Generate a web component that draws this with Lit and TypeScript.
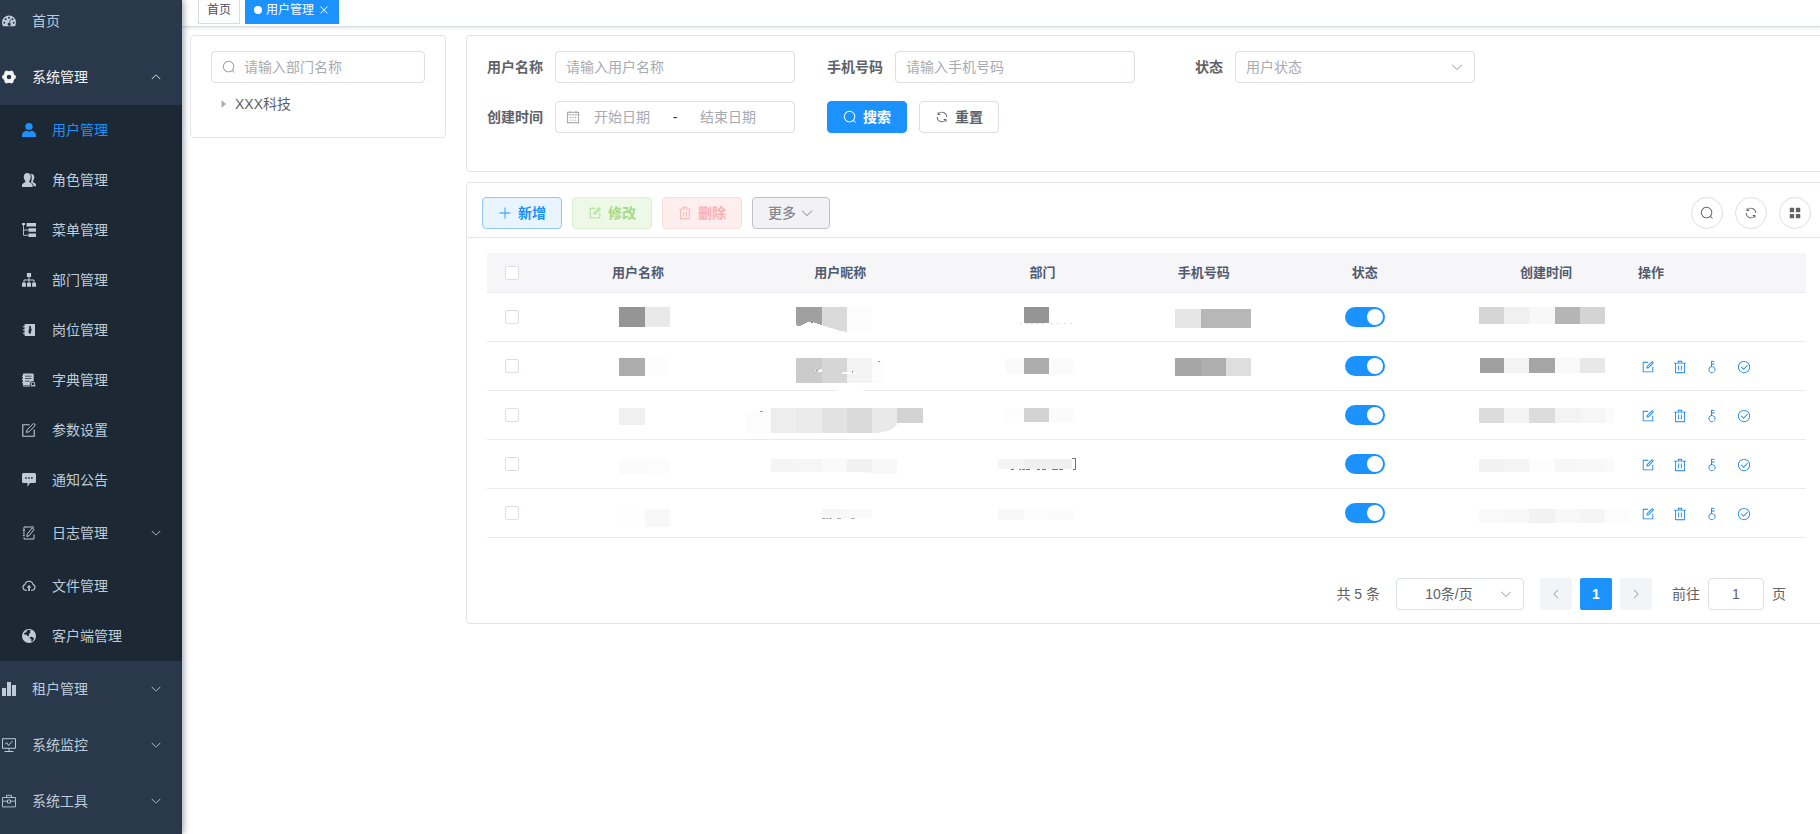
import { LitElement, html, css, svg, nothing } from "lit";
import { customElement, state } from "lit/decorators.js";
import { classMap } from "lit/directives/class-map.js";

const glyphs: Record<string, string> = {
  search: "M795.904 750.72l124.992 124.928a32 32 0 0 1-45.248 45.248L750.656 795.904a416 416 0 1 1 45.248-45.248zM480 832a352 352 0 1 0 0-704 352 352 0 0 0 0 704z",
  refresh: "M771.776 794.88A384 384 0 0 1 128 512h64a320 320 0 0 0 555.712 216.448H654.72a32 32 0 1 1 0-64h149.056a32 32 0 0 1 32 32v148.928a32 32 0 1 1-64 0v-50.56zM276.288 295.616h92.992a32 32 0 0 1 0 64H220.16a32 32 0 0 1-32-32V178.56a32 32 0 0 1 64 0v50.56A384 384 0 0 1 896.128 512h-64a320 320 0 0 0-555.776-216.384z",
  grid: "M160 448a32 32 0 0 1-32-32V160a32 32 0 0 1 32-32h256a32 32 0 0 1 32 32v256a32 32 0 0 1-32 32zm448 0a32 32 0 0 1-32-32V160a32 32 0 0 1 32-32h256a32 32 0 0 1 32 32v256a32 32 0 0 1-32 32zM160 896a32 32 0 0 1-32-32V608a32 32 0 0 1 32-32h256a32 32 0 0 1 32 32v256a32 32 0 0 1-32 32zm448 0a32 32 0 0 1-32-32V608a32 32 0 0 1 32-32h256a32 32 0 0 1 32 32v256a32 32 0 0 1-32 32z",
  down: "M831.872 340.864 512 652.672 192.128 340.864a30.592 30.592 0 0 0-42.752 0 29.12 29.12 0 0 0 0 41.6L489.664 714.24a32 32 0 0 0 44.672 0l340.288-331.712a29.12 29.12 0 0 0 0-41.728 30.592 30.592 0 0 0-42.752 0z",
  up: "M831.872 683.136 512 371.328 192.128 683.136a30.592 30.592 0 0 1-42.752 0 29.12 29.12 0 0 1 0-41.6L489.664 309.76a32 32 0 0 1 44.672 0l340.288 331.712a29.12 29.12 0 0 1 0 41.728 30.592 30.592 0 0 1-42.752 0z",
  left: "M683.136 831.872 371.328 512 683.136 192.128a30.592 30.592 0 0 0 0-42.752 29.12 29.12 0 0 0-41.6 0L309.76 489.664a32 32 0 0 0 0 44.672l331.712 340.288a29.12 29.12 0 0 0 41.728 0 30.592 30.592 0 0 0 0-42.752z",
  right: "M340.864 831.872 652.672 512 340.864 192.128a30.592 30.592 0 0 1 0-42.752 29.12 29.12 0 0 1 41.6 0L714.24 489.664a32 32 0 0 1 0 44.672L382.528 874.624a29.12 29.12 0 0 1-41.728 0 30.592 30.592 0 0 1 0-42.752z",
  caret: "M384 192v640l384-320.064z",
  plus: "M480 480V128a32 32 0 0 1 64 0v352h352a32 32 0 1 1 0 64H544v352a32 32 0 1 1-64 0V544H128a32 32 0 0 1 0-64h352z",
  edit: "M832 512a32 32 0 1 1 64 0v352a32 32 0 0 1-32 32H160a32 32 0 0 1-32-32V160a32 32 0 0 1 32-32h352a32 32 0 0 1 0 64H192v640h640zM469.952 554.24l52.8-7.552L847.104 222.4a32 32 0 1 0-45.248-45.248L477.44 501.44zm422.4-422.4a96 96 0 0 1 0 135.808l-331.84 331.84a32 32 0 0 1-18.112 9.088L436.8 623.68a32 32 0 0 1-36.224-36.224l15.104-105.6a32 32 0 0 1 9.024-18.112l331.904-331.84a96 96 0 0 1 135.744 0z",
  trash: "M160 256H96a32 32 0 0 1 0-64h256V95.936a32 32 0 0 1 32-32h256a32 32 0 0 1 32 32V192h256a32 32 0 1 1 0 64h-64v672a32 32 0 0 1-32 32H192a32 32 0 0 1-32-32zm448-64v-64H416v64zM224 896h576V256H224zm192-128a32 32 0 0 1-32-32V416a32 32 0 0 1 64 0v320a32 32 0 0 1-32 32zm192 0a32 32 0 0 1-32-32V416a32 32 0 0 1 64 0v320a32 32 0 0 1-32 32z",
  key: "M448 456.064V96a32 32 0 0 1 32-32.064L672 64a32 32 0 0 1 0 64H512v128h160a32 32 0 0 1 0 64H512v128a256 256 0 1 1-64 8.064zM512 896a192 192 0 1 0 0-384 192 192 0 0 0 0 384z",
  check: "M512 896a384 384 0 1 0 0-768 384 384 0 0 0 0 768zm0 64a448 448 0 1 1 0-896 448 448 0 0 1 0 896zM745.344 361.344a32 32 0 0 1 45.312 45.312l-288 288a32 32 0 0 1-45.312 0l-160-160a32 32 0 1 1 45.312-45.312L480 626.752z",
  close: "M764.288 214.592 512 466.88 259.712 214.592a31.936 31.936 0 0 0-45.12 45.12L466.752 512 214.528 764.224a31.936 31.936 0 1 0 45.12 45.184L512 557.184l252.288 252.288a31.936 31.936 0 0 0 45.12-45.12L557.12 512.064l252.288-252.352a31.936 31.936 0 1 0-45.12-45.184z",
  calendar: "M128 384v512h768V192H768v32a32 32 0 1 1-64 0v-32H320v32a32 32 0 0 1-64 0v-32H128v128h768v64zm192-256h384V96a32 32 0 1 1 64 0v32h160a32 32 0 0 1 32 32v768a32 32 0 0 1-32 32H96a32 32 0 0 1-32-32V160a32 32 0 0 1 32-32h160V96a32 32 0 0 1 64 0zm-32 384h64a32 32 0 0 1 0 64h-64a32 32 0 0 1 0-64m0 192h64a32 32 0 1 1 0 64h-64a32 32 0 1 1 0-64m192-192h64a32 32 0 0 1 0 64h-64a32 32 0 0 1 0-64m0 192h64a32 32 0 1 1 0 64h-64a32 32 0 1 1 0-64m192-192h64a32 32 0 1 1 0 64h-64a32 32 0 1 1 0-64m0 192h64a32 32 0 1 1 0 64h-64a32 32 0 1 1 0-64",
};

const icon = (name: string, size = 14) =>
  html`<svg class="icon" width=${size} height=${size} viewBox="0 0 1024 1024" aria-hidden="true"><path d=${glyphs[name]}></path></svg>`;

/* Menu icons, drawn on a 14 x 14 grid. */
const menuArt: Record<string, unknown> = {
  dashboard: svg`<path fill-rule="evenodd" d="M7 1.4a7 7 0 0 0-7 7c0 1.400.4 2.700 1 3.800h12c.6-1.100 1-2.400 1-3.800a7 7 0 0 0-7-7zM2.300 7.700a1 1 0 1 1 0 2 1 1 0 0 1 0-2zM3.600 4.300a1 1 0 1 1 0 2 1 1 0 0 1 0-2zM7 2.700a1 1 0 1 1 0 2 1 1 0 0 1 0-2zm3.400 1.600a1 1 0 1 1 0 2 1 1 0 0 1 0-2zm1.300 3.400a1 1 0 1 1 0 2 1 1 0 0 1 0-2zM8.200 5.400l.7.2-.9 3.400a1.500 1.500 0 1 1-.8-.2z"/>`,
  gear: svg`<circle cx="7" cy="7" r="4.100" fill="none" stroke="currentColor" stroke-width="3.700"/><path d="M10.600 7h3.200M3.400 7H.2M8.800 10.100l1.600 2.800M5.200 3.900 3.600 1.100M5.200 10.100l-1.600 2.800M8.800 3.900l1.600-2.800" fill="none" stroke="currentColor" stroke-width="3.200"/>`,
  user: svg`<ellipse cx="7" cy="3.600" rx="3.700" ry="3.500"/><path d="M0 14v-1.600C0 9.600 2 8.300 4.300 7.800c1.700.9 3.700.9 5.400 0C12 8.300 14 9.600 14 12.400V14z"/>`,
  roles: svg`<path d="M0 14v-2c0-1.600 2.600-2 3.400-2.900.3-.6-.1-1-.6-1.800C2 6 1.700 4.500 1.800 3.300 2 1.200 3.400 0 5.300 0s3.300 1.200 3.500 3.300c.1 1.200-.3 2.700-1 4-.5.800-.8 1.200-.6 1.800.8.900 3.400 1.300 3.400 2.900v2z"/><path d="M8.600.8c2 0 3.600 1 3.700 3.300 0 1.600-.6 2.800-1.100 3.600-.4.700-.2 1.100.1 1.500.9.600 2.700 1 2.700 2.600v1.500h-2.400c0-2.400-.9-3-2.700-3.900C9.700 7.200 10.600 3.600 8.600.8z"/>`,
  tree: svg`<path d="M0 0h3v2H0zM4.500 0H14v3.500H4.500zM6.500 5.300H14v3.400H6.500zM6.500 10.500H14V14H6.500z"/><path d="M1.500 2v10.300h5M1.500 7h5" fill="none" stroke="currentColor" stroke-width=".9"/>`,
  dept: svg`<path d="M4.900 0h4.200v4H4.900zM0 9.800h3.900v4H0zM5 9.800h4v4H5zM10.100 9.800H14v4h-3.900z"/><path d="M7 4v6M2 10V7h10v3" fill="none" stroke="currentColor"/>`,
  post: svg`<path fill-rule="evenodd" d="M3.500 1H13v12H3.500a1 1 0 0 1-1-1V2a1 1 0 0 1 1-1zm3.100 2.200.7 1.300-.9 4.500L7.900 11.300 9.300 9l-.6-1.500h1V5.800h-1l.5-2.600z"/><path d="M.8 3.800h2.600M.8 7h2.600M.8 10.200h2.600" stroke="currentColor" stroke-width="1.100"/>`,
  dict: svg`<path fill-rule="evenodd" d="M1.500.5h9A1.200 1.200 0 0 1 11.700 1.700v6.400A3.100 3.100 0 0 0 7.900 12H.8V9.800H0V8.900h.8V7H0V6h.8V4.200H0v-1h.8V1.300zM3 2.800v.8h6.600v-.8zm0 2.500v.8h6.600v-.8zm0 2.500v.8h4.800v-.8z"/><path d="M1 13h7" stroke="currentColor"/><circle cx="10.900" cy="11" r="1.900" fill="none" stroke="currentColor"/><path d="m8.600 13 2.300-.4 2.700.4" stroke="currentColor" fill="none"/>`,
  edit: svg`<path d="M7.500 1.700H.8v11.500h11.400V6.500" fill="none" stroke="currentColor" stroke-width="1.100"/><path d="m5 6.800 5.800-5.700a1.300 1.300 0 0 1 1.900 0 1.300 1.300 0 0 1 0 1.900L7 8.800l-2.500.6z" fill="none" stroke="currentColor"/>`,
  message: svg`<path fill-rule="evenodd" d="M1.500 0h11A1.500 1.500 0 0 1 14 1.500v7a1.500 1.500 0 0 1-1.500 1.500H8l-2.500 3.700V10h-4A1.500 1.500 0 0 1 0 8.500v-7A1.500 1.500 0 0 1 1.500 0zm1.800 4.300v1.500h1.600V4.300zm2.900 0v1.500h1.600V4.300zm2.900 0v1.500h1.600V4.300z"/>`,
  log: svg`<path d="M2 5V1h6.500M12 8.500V13H2v-1.500M.8 4.300h2M.8 7h2M.8 9.700h2M2 5.400v.8M2 8v.8" fill="none" stroke="currentColor"/><path d="M8.500 1H12" stroke="currentColor"/><path d="m5.200 8.200 5-6.200 1.900 1.500-5 6.200-2.300.8z" fill="none" stroke="currentColor"/>`,
  cloud: svg`<path d="M5 11.300H3.600A3 3 0 0 1 3 5.500a4.100 4.100 0 0 1 8 0 3 3 0 0 1-.6 5.800H9" fill="none" stroke="currentColor" stroke-width="1.100"/><path d="M7 6 9.300 8.600H7.800V12H6.200V8.600H4.700z"/>`,
  globe: svg`<circle cx="7" cy="7" r="7"/><path class="sea" d="M5.600.9 4 3.200 1.900 4.300l.9 1.500 2-.1.800 1.500 1.500-.3-.4-1.700 1.700-1.500-.3-1.400 1-1.100zM7.700 8.200l2-.4 2 1.100.3 1.200-1.700 2.300-1 .2.100-2.300-1.700-1z"/>`,
  bars: svg`<path d="M0 6h4v8H0zM5 0h4v14H5zM10 3h4v11h-4z"/>`,
  monitor: svg`<path d="M.5.700h13v9.600H.5zM7 10.300v3M2.500 13.500h9" fill="none" stroke="currentColor"/><path d="m3 6.300 1.800-1.600L6.500 7.500l4-4.500" fill="none" stroke="currentColor"/>`,
  tool: svg`<path d="M.5 3.500h13v9.400H.5zM4.500 3.500V1.300h5v2.200M.5 7.200h5M8.500 7.200h5M5.500 6h3v3h-3z" fill="none" stroke="currentColor" stroke-width=".9"/>`,
};

const menuIcon = (name: string) =>
  html`<svg class="icon" width="14" height="14" viewBox="0 0 14 14" aria-hidden="true">${menuArt[name]}</svg>`;

const subMenu = [
  ["user", "用户管理"], ["roles", "角色管理"], ["tree", "菜单管理"], ["dept", "部门管理"],
  ["post", "岗位管理"], ["dict", "字典管理"], ["edit", "参数设置"], ["message", "通知公告"],
  ["log", "日志管理"], ["cloud", "文件管理"], ["globe", "客户端管理"],
];

/* Masked cell values: runs of [x, y, width, height, grey] blocks inside the cell. */
type Block = [number, number, number, number, string];
const run = (x: number, y: number, h: number, cells: [number, string][]): Block[] => {
  let at = x;
  return cells.map(([w, c]) => {
    const b: Block = [at, y, w, h, c];
    at += w;
    return b;
  });
};
interface Mask { blocks: Block[]; extra?: unknown }

const names: Mask[] = [
  { blocks: run(82, 14, 20, [[26, "#959595"], [25, "#e9e9e9"]]) },
  { blocks: run(82, 16, 18, [[26, "#adadad"], [25, "#fdfdfd"]]) },
  { blocks: run(82, 17, 17, [[26, "#f0f0f0"]]) },
  { blocks: run(82, 19, 15, [[26, "#fbfbfb"], [25, "#fcfcfc"]]) },
  { blocks: run(82, 20, 18, [[26, "#fefefe"], [25, "#f8f8f8"]]) },
];
const nicks: Mask[] = [
  {
    blocks: run(57, 14, 25, [[26, "#a0a0a0"], [25, "#dadada"], [25, "#fcfcfc"]]),
    extra: svg`<path fill="#fff" d="M57 32c4 2 7 0 10-2s6-2 9 0l16 5q8 3 16 4v2H57z"/><path d="M72 29.500h2" stroke="#777"/>`,
  },
  {
    blocks: [...run(57, 16, 25, [[26, "#cbcbcb"], [25, "#d6d6d6"], [25, "#f3f3f3"]]), [133, 20, 12, 21, "#fcfcfc"]],
    extra: svg`<path fill="#fff" d="m74 29 9-2v3zM101 31q9-2 20 0-10 3-20 0z"/><path fill="#999" d="M77 28h2v1h-2zM113 29h1v2h-1zM139 19h2v1h-2z"/><ellipse cx="111" cy="47" rx="15" ry="3" fill="#fff"/>`,
  },
  {
    blocks: [...run(7, 17, 25, [[25, "#fcfcfc"], [25, "#ededed"], [26, "#ebebeb"], [25, "#e2e2e2"], [25, "#dadada"], [25, "#e9e9e9"]]), [158, 17, 26, 15, "#d3d3d3"]],
    extra: svg`<path fill="#fff" d="M7 17h20l-20 6zM158 32q-1 9-25 10h26z"/><path d="M21 20.500h3" stroke="#999"/>`,
  },
  {
    blocks: run(32, 19, 13, [[25, "#f5f5f5"], [26, "#f6f6f6"], [25, "#fafafa"], [25, "#f1f1f1"], [25, "#f8f8f8"]]),
    extra: svg`<path fill="#f8f8f8" d="M124 32h34v2h-28z"/>`,
  },
  {
    blocks: run(83, 20, 9, [[25, "#f7f7f7"], [25, "#fafafa"]]),
    extra: svg`<path d="M83 29.500h3m1 0h2m1 0h3m5 0h4m10 0h4" stroke="#aaa"/>`,
  },
];
const depts: Mask[] = [
  { blocks: [[82, 14, 25, 16, "#959595"]], extra: svg`<path d="M78 30.500h2m4 0h3m1 0h4m2 0h3m2 0h3m6 0h3m4 0h2m5 0h2m4 0h2" stroke="#e0e0e0"/>` },
  { blocks: run(63, 16, 16, [[19, "#fafafa"], [25, "#adadad"], [24, "#fbfbfb"]]) },
  { blocks: run(63, 17, 14, [[19, "#fdfdfd"], [25, "#d3d3d3"], [24, "#fbfbfb"]]) },
  {
    blocks: run(56, 19, 10, [[26, "#f4f4f4"], [48, "#f0f0f0"]]),
    extra: svg`<path d="M69 29.500h3m5 0h2m1 0h3m1 0h4m7 0h3m2 0h4m6 0h6m1 0h4" stroke="#777"/><path d="M130 18.500h3.500v11H131" fill="none" stroke="#777"/>`,
  },
  { blocks: run(56, 20, 11, [[26, "#f8f8f8"], [24, "#fdfdfd"], [25, "#fbfbfb"]]) },
];
const phones: (Mask | null)[] = [
  { blocks: run(31, 16, 19, [[26, "#e6e6e6"], [50, "#b7b7b7"]]) },
  { blocks: run(31, 16, 18, [[26, "#a6a6a6"], [25, "#aeaeae"], [25, "#dedede"]]) },
  null, null, null,
];
const dates: Mask[] = [
  { blocks: run(13, 14, 17, [[25, "#d5d5d5"], [25, "#f0f0f0"], [26, "#f8f8f8"], [25, "#b5b5b5"], [25, "#d4d4d4"]]) },
  { blocks: run(14, 16, 15, [[24, "#a0a0a0"], [25, "#f3f3f3"], [26, "#a5a5a5"], [25, "#f9f9f9"], [25, "#e8e8e8"]]) },
  { blocks: run(13, 17, 15, [[25, "#dcdcdc"], [25, "#f4f4f4"], [26, "#dcdcdc"], [25, "#f3f3f3"], [25, "#f6f6f6"], [9, "#fbfbfb"]]) },
  { blocks: run(13, 19, 13, [[25, "#f2f2f2"], [25, "#f5f5f5"], [26, "#fdfdfd"], [25, "#f7f7f7"], [25, "#f8f8f8"], [9, "#fafafa"]]) },
  { blocks: run(13, 20, 14, [[25, "#fafafa"], [25, "#f8f8f8"], [26, "#f2f2f2"], [25, "#f8f8f8"], [25, "#f5f5f5"], [24, "#fcfcfc"]]) },
];

const mask = (m: Mask | null, width: number) =>
  m
    ? html`<svg class="mask" width=${width} height="48" viewBox="0 0 ${width} 48" shape-rendering="crispEdges" aria-hidden="true">
        ${m.blocks.map(([x, y, w, h, c]) => svg`<rect x=${x} y=${y} width=${w} height=${h} fill=${c}></rect>`)}${m.extra ?? nothing}
      </svg>`
    : nothing;

@customElement("app-root")
export class AppRoot extends LitElement {
  @state() private enabled = [true, true, true, true, true];

  static styles = css`
    :host {
      display: flex;
      min-height: 100vh;
      overflow: hidden;
      background: #fff;
      color: #606266;
      font: 14px/20px "Liberation Sans", "Noto Sans CJK SC", sans-serif;
    }
    * { box-sizing: border-box; }
    button, input, select { font: inherit; color: inherit; margin: 0; }
    button { cursor: pointer; }
    input, select { outline: none; }
    input::placeholder { color: #a8abb2; opacity: 1; }
    .icon { fill: currentColor; flex: none; display: block; }

    .sidebar {
      flex: 0 0 182px;
      background: #29394b;
      color: #bfcbd9;
      box-shadow: 2px 0 6px rgba(0, 21, 41, 0.35);
      position: relative;
    }
    .item {
      display: flex;
      align-items: center;
      gap: 16px;
      width: 100%;
      height: 56px;
      padding: 0 20px 0 2px;
      border: 0;
      background: none;
      color: inherit;
      text-decoration: none;
      text-align: left;
    }
    .item span { flex: 1; }
    .item.home { height: 42px; margin-bottom: 7px; }
    .item.open { color: #f4f4f5; }
    .sub { background: #1c2935; }
    .sub .item { height: 50px; padding-left: 22px; }
    .sub .item.group { height: 56px; }
    .sub .item.active { color: #1c92ff; }
    .sea { fill: #1c2935; }

    .main { flex: 1; min-width: 0; }
    .tabs {
      display: flex;
      gap: 5px;
      height: 27px;
      padding-left: 16px;
      border-bottom: 1px solid #d8dce5;
      box-shadow: 0 1px 3px rgba(0, 0, 0, 0.12);
    }
    .tab {
      display: flex;
      align-items: center;
      gap: 4px;
      height: 24px;
      padding: 0 8px 4px;
      border: 1px solid #d8dce5;
      border-top: 0;
      color: #495060;
      font-size: 12px;
      text-decoration: none;
    }
    .tab.active { background: #1c92ff; border-color: #1c92ff; color: #fff; }
    .dot { width: 8px; height: 8px; border-radius: 50%; background: #fff; }

    .content {
      display: grid;
      grid-template-columns: 256px minmax(0, 1fr);
      align-items: start;
      gap: 20px;
      margin: 8px -7px 0 8px;
    }
    .card { border: 1px solid #e1e4ea; border-radius: 4px; background: #fff; }
    .dept { padding: 15px 20px 20px; }
    .field {
      display: flex;
      align-items: center;
      gap: 8px;
      height: 32px;
      padding: 0 10px;
      border: 1px solid #dcdfe6;
      border-radius: 4px;
      background: #fff;
      color: #a8abb2;
    }
    .field input, .field select {
      flex: 1;
      min-width: 0;
      width: 100%;
      height: 30px;
      padding: 0;
      border: 0;
      background: none;
      appearance: none;
    }
    .node {
      display: flex;
      align-items: center;
      gap: 6px;
      height: 26px;
      margin-top: 8px;
      padding: 0 6px;
      border: 0;
      background: none;
    }
    .node .icon { color: #a8abb2; }

    .stack { display: grid; gap: 10px; }
    .search { display: flex; flex-wrap: wrap; gap: 18px 32px; padding: 15px 20px 38px; }
    .form-item { display: flex; align-items: center; }
    .form-item label { width: 68px; padding-right: 12px; text-align: right; font-weight: 700; }
    .form-item .field { width: 240px; }
    .form-item .range { padding-right: 32px; }
    .range input { text-align: center; }
    .range .sep { width: 22px; text-align: center; color: #303133; }

    .btn {
      display: inline-flex;
      align-items: center;
      justify-content: center;
      gap: 6px;
      height: 32px;
      padding: 0 15px;
      border: 1px solid #dcdfe6;
      border-radius: 4px;
      background: #fff;
      color: #606266;
      font-weight: 700;
    }
    .actions { display: flex; gap: 12px; }
    .btn.primary { background: #1c92ff; border-color: #1c92ff; color: #fff; }
    .btn.add { background: #e8f4ff; border-color: #8ec8ff; color: #1c92ff; }
    .btn.modify { background: #edf8e7; border-color: #dcf0d2; color: #a4da89; }
    .btn.remove { background: #feeeee; border-color: #fddcdc; color: #fab0b0; }
    .btn.more { gap: 4px; background: #f2f2f4; border-color: #c0c2c6; color: #86898f; font-weight: 500; }

    .toolbar {
      display: flex;
      align-items: center;
      gap: 10px;
      padding: 14px 15px 8px;
      border-bottom: 1px solid #e1e4ea;
    }
    .tools { display: flex; gap: 12px; margin-left: auto; }
    .round { width: 32px; padding: 0; border-radius: 50%; }
    .body { padding: 15px 20px 13px; }

    table { width: 100%; border-collapse: separate; border-spacing: 0; table-layout: fixed; }
    th {
      height: 40px;
      padding: 0;
      background: #f6f6f9;
      border-bottom: 1px solid #e8eaef;
      color: #515a6e;
      font-size: 13px;
      font-weight: 700;
      text-align: center;
    }
    td { height: 49px; padding: 0; border-bottom: 1px solid #e8eaee; text-align: center; }
    th.ops, td.ops { text-align: left; padding-left: 12px; }
    .c-check { width: 50px; }
    .c-phone { width: 120px; }
    .c-date { width: 160px; }
    .c-ops { width: 180px; }
    .mask { display: block; margin: 0 auto; overflow: visible; }
    .check {
      appearance: none;
      display: block;
      width: 14px;
      height: 14px;
      margin: 0 auto;
      border: 1px solid #dcdfe6;
      border-radius: 2px;
      background: #fff;
    }
    .switch {
      appearance: none;
      display: flex;
      align-items: center;
      width: 40px;
      height: 20px;
      margin: 0 auto;
      padding: 0 2px;
      border-radius: 10px;
      background: #dcdfe6;
    }
    .switch::before { content: ""; width: 16px; height: 16px; border-radius: 50%; background: #fff; }
    .switch:checked { background: #1c92ff; justify-content: flex-end; }
    .links { display: flex; gap: 18px; padding: 2px 0 0 3px; }
    .links button { padding: 0; border: 0; background: none; color: #1080ea; }

    .pager { display: flex; align-items: center; justify-content: flex-end; margin-top: 40px; padding-right: 20px; }
    .pager .size { width: 128px; margin: 0 16px; }
    .size select { text-align: center; text-align-last: center; color: #606266; }
    .pages { display: flex; gap: 8px; margin-right: 20px; }
    .pages button {
      display: grid;
      place-items: center;
      width: 32px;
      height: 32px;
      padding: 0;
      border: 0;
      border-radius: 2px;
      background: #f2f5f8;
      color: #8d9097;
    }
    .pages .current { background: #1c92ff; color: #fff; font-weight: 700; }
    .jump { display: flex; align-items: center; gap: 8px; }
    .jump .field { width: 56px; }
    .jump input { text-align: center; color: #606266; }
    .field .icon { color: #999ca3; }
  `;

  private toggle(i: number) {
    this.enabled = this.enabled.map((on, n) => (n === i ? !on : on));
  }

  private renderRow(i: number) {
    return html`<tr>
      <td><input class="check" type="checkbox" aria-label="选择" /></td>
      <td>${mask(names[i], 202)}</td>
      <td>${mask(nicks[i], 202)}</td>
      <td>${mask(depts[i], 202)}</td>
      <td>${mask(phones[i], 120)}</td>
      <td><input class="switch" type="checkbox" role="switch" aria-label="状态" .checked=${this.enabled[i]} @change=${() => this.toggle(i)} /></td>
      <td>${mask(dates[i], 160)}</td>
      <td class="ops">
        ${i === 0 ? nothing : html`<div class="links">
          <button aria-label="修改">${icon("edit")}</button>
          <button aria-label="删除">${icon("trash")}</button>
          <button aria-label="重置密码">${icon("key")}</button>
          <button aria-label="分配角色">${icon("check")}</button>
        </div>`}
      </td>
    </tr>`;
  }

  render() {
    return html`
      <nav class="sidebar">
        <a class="item home" href="#">${menuIcon("dashboard")}<span>首页</span></a>
        <button class="item open" aria-expanded="true">${menuIcon("gear")}<span>系统管理</span>${icon("up", 12)}</button>
        <div class="sub">
          ${subMenu.map(([art, text]) =>
            art === "log"
              ? html`<button class="item group">${menuIcon(art)}<span>${text}</span>${icon("down", 12)}</button>`
              : html`<a class=${classMap({ item: true, active: art === "user" })} href="#">${menuIcon(art)}<span>${text}</span></a>`
          )}
        </div>
        <button class="item">${menuIcon("bars")}<span>租户管理</span>${icon("down", 12)}</button>
        <button class="item">${menuIcon("monitor")}<span>系统监控</span>${icon("down", 12)}</button>
        <button class="item">${menuIcon("tool")}<span>系统工具</span>${icon("down", 12)}</button>
      </nav>

      <div class="main">
        <div class="tabs">
          <a class="tab" href="#">首页</a>
          <a class="tab active" href="#"><i class="dot"></i>用户管理${icon("close", 12)}</a>
        </div>

        <div class="content">
          <aside class="card dept">
            <div class="field">${icon("search")}<input type="text" placeholder="请输入部门名称" aria-label="部门名称" /></div>
            <button class="node">${icon("caret", 12)}XXX科技</button>
          </aside>

          <div class="stack">
            <form class="card search" @submit=${(e: Event) => e.preventDefault()}>
              <div class="form-item">
                <label for="name">用户名称</label>
                <div class="field"><input id="name" type="text" placeholder="请输入用户名称" /></div>
              </div>
              <div class="form-item">
                <label for="phone">手机号码</label>
                <div class="field"><input id="phone" type="text" placeholder="请输入手机号码" /></div>
              </div>
              <div class="form-item">
                <label for="status">状态</label>
                <div class="field"><select id="status"><option>用户状态</option></select>${icon("down")}</div>
              </div>
              <div class="form-item">
                <label for="from">创建时间</label>
                <div class="field range">
                  ${icon("calendar")}
                  <input id="from" type="text" placeholder="开始日期" />
                  <span class="sep">-</span>
                  <input type="text" placeholder="结束日期" aria-label="结束日期" />
                </div>
              </div>
              <div class="actions">
                <button class="btn primary">${icon("search")}搜索</button>
                <button class="btn" type="reset">${icon("refresh")}重置</button>
              </div>
            </form>

            <section class="card">
              <div class="toolbar">
                <button class="btn add">${icon("plus")}新增</button>
                <button class="btn modify">${icon("edit")}修改</button>
                <button class="btn remove">${icon("trash")}删除</button>
                <button class="btn more">更多${icon("down")}</button>
                <div class="tools">
                  <button class="btn round" aria-label="搜索">${icon("search")}</button>
                  <button class="btn round" aria-label="刷新">${icon("refresh")}</button>
                  <button class="btn round" aria-label="显隐列">${icon("grid")}</button>
                </div>
              </div>
              <div class="body">
                <table>
                  <colgroup>
                    <col class="c-check" /><col /><col /><col /><col class="c-phone" /><col /><col class="c-date" /><col class="c-ops" />
                  </colgroup>
                  <thead>
                    <tr>
                      <th><input class="check" type="checkbox" aria-label="全选" /></th>
                      <th>用户名称</th><th>用户昵称</th><th>部门</th><th>手机号码</th><th>状态</th><th>创建时间</th>
                      <th class="ops">操作</th>
                    </tr>
                  </thead>
                  <tbody>${names.map((_, i) => this.renderRow(i))}</tbody>
                </table>
                <div class="pager">
                  <span>共 5 条</span>
                  <div class="field size"><select aria-label="每页条数"><option>10条/页</option></select>${icon("down")}</div>
                  <div class="pages">
                    <button aria-label="上一页">${icon("left", 12)}</button>
                    <button class="current">1</button>
                    <button aria-label="下一页">${icon("right", 12)}</button>
                  </div>
                  <div class="jump">
                    <label for="page">前往</label>
                    <div class="field"><input id="page" type="text" value="1" /></div>
                    <span>页</span>
                  </div>
                </div>
              </div>
            </section>
          </div>
        </div>
      </div>
    `;
  }
}
